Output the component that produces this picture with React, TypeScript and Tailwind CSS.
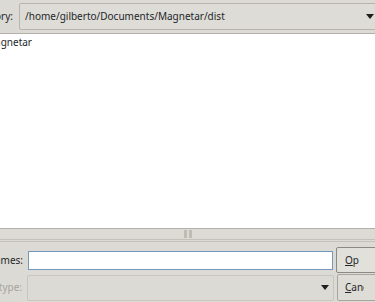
function Arrow() {
  return (
    <svg width="8" height="5" viewBox="0 0 8 5" className="shrink-0">
      <polygon points="0,0 8,0 4,5" fill="#1e1e1e" />
    </svg>
  );
}

export default function App() {
  return (
    <div className="w-[375px] h-[302px] overflow-hidden bg-[#dcdad5] text-[10px] text-[#232629] font-['Noto_Sans',sans-serif]">
      {/* Look in row */}
      <div className="flex h-[33px] pt-[3px]">
        <div className="-ml-[67px] w-[80px] h-[27px] shrink-0 flex items-center justify-end whitespace-nowrap">Directory:</div>
        <div className="ml-[6px] w-[362px] h-[27px] shrink-0 flex items-center pl-[5px] pr-[6px] border border-[#b7b4ad] rounded-[2px] bg-[#dedcd7]">
          <span className="whitespace-nowrap">/home/gilberto/Documents/Magnetar/dist</span>
          <div className="ml-auto">
            <Arrow />
          </div>
        </div>
      </div>

      {/* File list */}
      <div className="h-[196px] border-y border-[#b3b0a9] bg-white">
        <div className="-ml-[14px] leading-[16px] whitespace-nowrap">Magnetar</div>
      </div>

      {/* Splitter handle */}
      <div className="h-[10px] flex items-center justify-center gap-[2px]">
        <div className="w-[3px] h-[8px] bg-[#bebbb4]" />
        <div className="w-[3px] h-[8px] bg-[#bebbb4]" />
      </div>
      <div className="h-[3px] border-y border-[#c4c1ba]" />

      {/* Bottom controls */}
      <div className="pt-[5px]">
        <div className="flex items-center h-[26px]">
          <div className="-ml-[57px] w-[80px] shrink-0 text-right whitespace-nowrap">File names:</div>
          <div className="ml-[5px] w-[305px] h-[19px] shrink-0 border border-[#7397bd] bg-white" />
          <div className="ml-[3px] w-[60px] h-[26px] shrink-0 flex items-center pl-[8px] border border-[#8c8983] rounded-[2px] bg-[#e2e0db]">
            <div className="w-[14px] overflow-hidden whitespace-nowrap">
              <span className="underline">O</span>pen
            </div>
          </div>
        </div>
        <div className="flex items-center h-[27px] mt-[1px]">
          <div className="-ml-[58px] w-[80px] shrink-0 text-right whitespace-nowrap text-[#a6a49f]">Files of type:</div>
          <div className="ml-[5px] w-[307px] h-[26px] shrink-0 flex items-center justify-end pr-[4px] border border-[#c9c6c0] rounded-[2px] bg-[#dcdad5]">
            <Arrow />
          </div>
          <div className="ml-[3px] w-[60px] h-[27px] shrink-0 flex items-center pl-[7px] border border-[#a9a69f] rounded-[2px] bg-[#dedcd7]">
            <div className="w-[19px] overflow-hidden whitespace-nowrap">
              <span className="underline">C</span>ancel
            </div>
          </div>
        </div>
      </div>
    </div>
  );
}
